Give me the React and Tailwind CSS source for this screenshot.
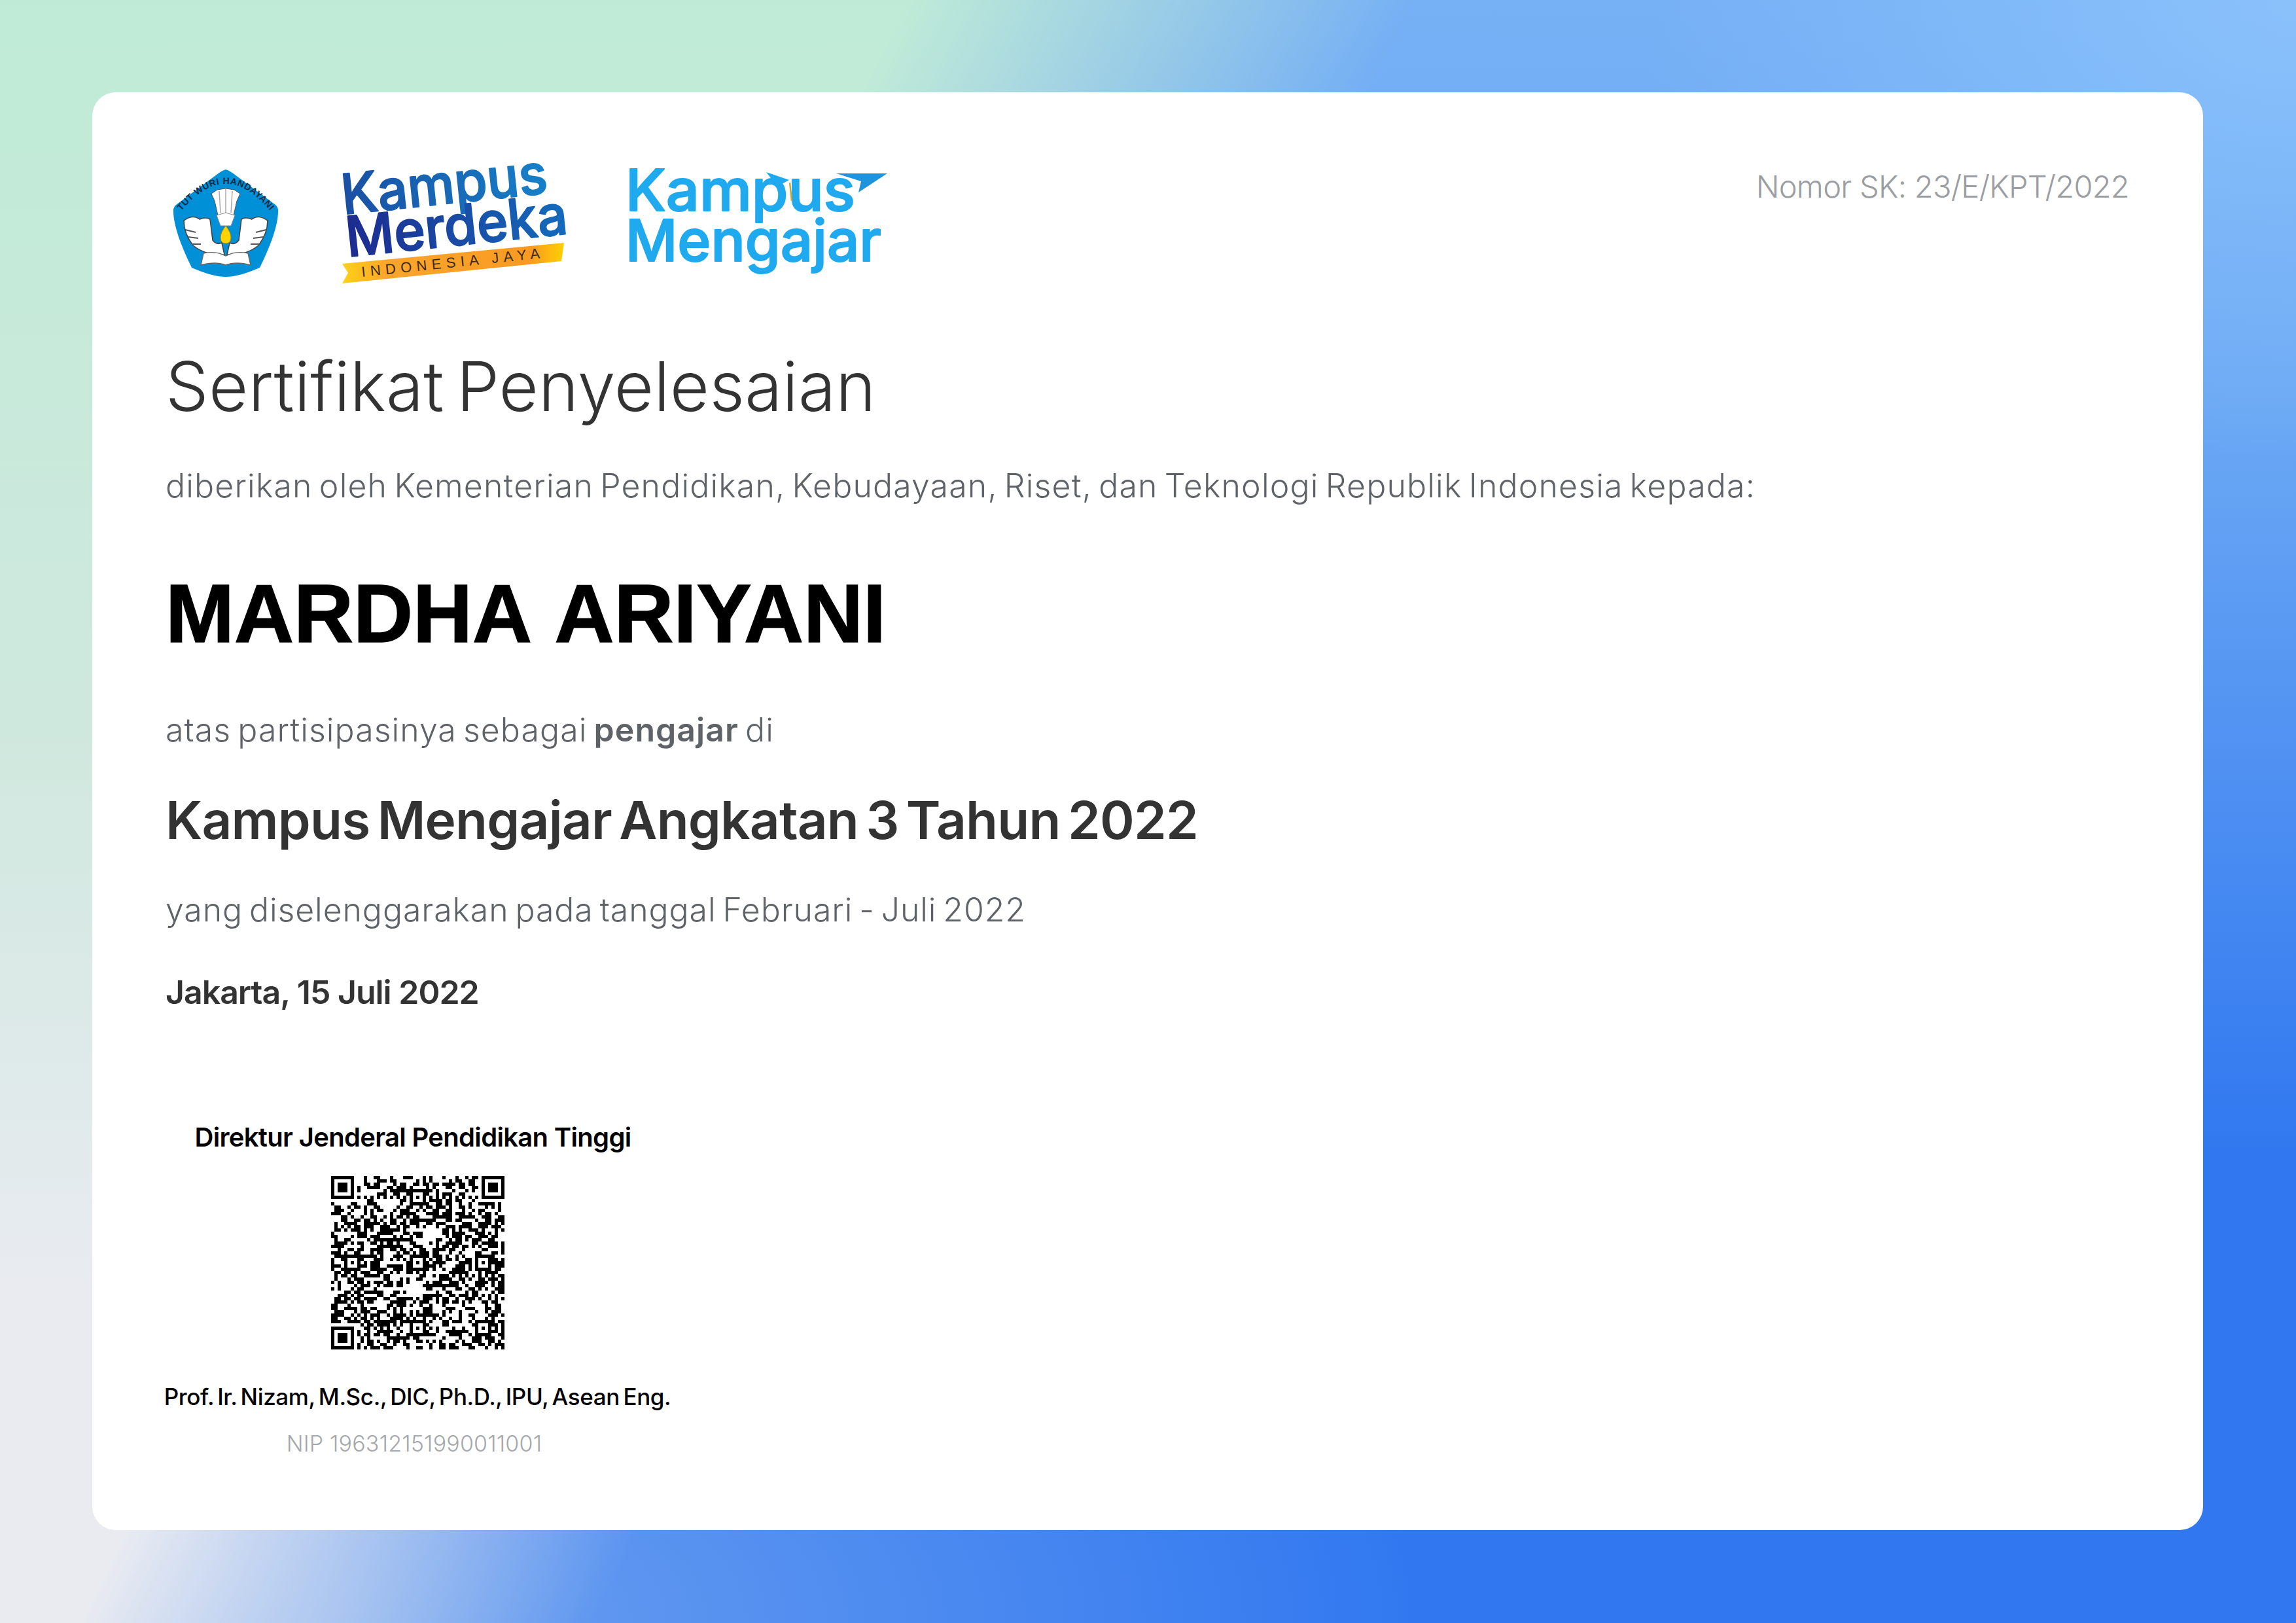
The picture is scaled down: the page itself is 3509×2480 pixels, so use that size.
const qrSize = 53;

// finder, timing and alignment patterns, the rest is filler noise
const buildQr = () => {
  const cells = [];
  let seed = 20220715;
  const next = () => {
    seed = (seed * 1664525 + 1013904223) % 4294967296;
    return seed / 4294967296;
  };
  for (let y = 0; y < qrSize; y++) {
    const row = [];
    for (let x = 0; x < qrSize; x++) row.push(next() > 0.5);
    cells.push(row);
  }
  const blank = [[17, 8, 3], [25, 34, 3], [30, 17, 2]];
  blank.forEach(([cx, cy, r]) => {
    for (let y = cy - r; y <= cy + r; y++)
      for (let x = cx - r; x <= cx + r; x++)
        if (Math.abs(x - cx) + Math.abs(y - cy) <= r) cells[y][x] = false;
  });
  const finder = (ox, oy) => {
    for (let y = -1; y < 8; y++)
      for (let x = -1; x < 8; x++) {
        const px = ox + x;
        const py = oy + y;
        if (px < 0 || py < 0 || px >= qrSize || py >= qrSize) continue;
        const ring = x >= 0 && x <= 6 && y >= 0 && y <= 6 && (x === 0 || x === 6 || y === 0 || y === 6);
        const core = x >= 2 && x <= 4 && y >= 2 && y <= 4;
        cells[py][px] = ring || core;
      }
  };
  finder(0, 0);
  finder(qrSize - 7, 0);
  finder(0, qrSize - 7);
  for (let i = 8; i < qrSize - 8; i++) {
    cells[6][i] = i % 2 === 0;
    cells[i][6] = i % 2 === 0;
  }
  const spots = [[6, 26], [26, 6], [26, 26], [26, 46], [46, 26], [46, 46]];
  spots.forEach(([cx, cy]) => {
    for (let y = -2; y <= 2; y++)
      for (let x = -2; x <= 2; x++)
        cells[cy + y][cx + x] = Math.max(Math.abs(x), Math.abs(y)) !== 1;
  });
  let d = '';
  cells.forEach((row, y) => row.forEach((on, x) => {
    if (on) d += `M${x} ${y}h1v1h-1z`;
  }));
  return d;
};

const qrPath = buildQr();

const TutWuri = () => (
  <svg width="160" height="164" viewBox="0 0 160 164" className="mt-2 ml-3 shrink-0 overflow-visible">
    <path d="M80 0 Q84 1 90 5 L156 54 Q161 58 160 66 Q159 95 132 150 Q100 164 80 164 Q60 164 28 150 Q1 95 0 66 Q-1 58 4 54 L70 5 Q76 1 80 0Z" fill="#0090d7" />
    <defs>
      <path id="tutArc" d="M10 66 Q80 -22 150 66" />
    </defs>
    <text fontFamily="Liberation Sans, sans-serif" fontSize="14" fontWeight="700" fill="#0f2a44" letterSpacing="0.6">
      <textPath href="#tutArc" startOffset="50%" textAnchor="middle">TUT WURI HANDAYANI</textPath>
    </text>
    <path d="M58 37 L67 31 L80 29 L93 31 L102 37 L97 48 L92 70 L68 70 L63 48Z" fill="#fff" stroke="#555" strokeWidth="1" />
    <path d="M70 33 L72 66 M80 30 L80 66 M90 33 L88 66" stroke="#aaa" strokeWidth="1.5" fill="none" />
    <path d="M16 78 Q30 68 40 76 Q50 72 56 76 L60 108 Q66 116 74 112 L78 130 Q50 132 30 116 Q16 98 16 78Z" fill="#fff" stroke="#444" strokeWidth="1.6" />
    <path d="M144 78 Q130 68 120 76 Q110 72 104 76 L100 108 Q94 116 86 112 L82 130 Q110 132 130 116 Q144 98 144 78Z" fill="#fff" stroke="#444" strokeWidth="1.6" />
    <path d="M18 92 L34 96 M22 103 L38 105 M28 114 L42 114 M142 92 L126 96 M138 103 L122 105 M132 114 L118 114" stroke="#555" strokeWidth="2" fill="none" />
    <path d="M66 70 L80 66 L94 70 L88 86 L72 86Z" fill="#fff" stroke="#888" strokeWidth="1" />
    <path d="M80 86 Q88 96 88 104 Q88 113 80 113 Q72 113 72 104 Q72 96 80 86Z" fill="#ffd200" stroke="#a8860f" strokeWidth="1" />
    <path d="M46 128 Q64 124 80 132 Q96 124 114 128 L118 146 Q96 140 80 146 Q64 140 42 146Z" fill="#fff" stroke="#666" strokeWidth="1.4" />
  </svg>
);

const KampusMerdeka = () => (
  <svg width="340" height="182" viewBox="0 0 340 182" className="ml-[98px] shrink-0 overflow-visible">
    <defs>
      <linearGradient id="kmTop" x1="0" x2="1" y1="0" y2="0">
        <stop offset="0" stopColor="#1a4fa3" />
        <stop offset="1" stopColor="#1680c9" />
      </linearGradient>
      <linearGradient id="kmMid" x1="0" x2="1" y1="0" y2="0">
        <stop offset="0" stopColor="#1d2a8f" />
        <stop offset="1" stopColor="#146cbc" />
      </linearGradient>
      <linearGradient id="kmBand" x1="0" x2="1" y1="0" y2="0">
        <stop offset="0" stopColor="#ffd117" />
        <stop offset="0.2" stopColor="#fba52c" />
        <stop offset="0.85" stopColor="#f99a22" />
        <stop offset="1" stopColor="#ffd000" />
      </linearGradient>
    </defs>
    <g transform="rotate(-6 0 80)" fontFamily="Inter, sans-serif" fontWeight="500" strokeWidth="2" strokeLinejoin="round">
      <text x="2" y="77" fontSize="85" fill="url(#kmTop)" stroke="url(#kmTop)" textLength="316" lengthAdjust="spacingAndGlyphs">Kampus</text>
      <text x="2" y="142" fontSize="85" fill="url(#kmMid)" stroke="url(#kmMid)" textLength="340" lengthAdjust="spacingAndGlyphs">Merdeka</text>
    </g>
    <path d="M0 152 L339 120 L335 148 L0 182 L9 166Z" fill="url(#kmBand)" />
    <text transform="rotate(-6 30 170)" x="30" y="172" fontFamily="Liberation Sans, sans-serif" fontSize="22" fill="#3a2a18" letterSpacing="7.4">INDONESIA JAYA</text>
  </svg>
);

const KampusMengajar = () => (
  <svg width="398" height="172" viewBox="0 0 398 172" className="ml-[93px] shrink-0 overflow-visible">
    <g fontFamily="Inter, sans-serif" fontWeight="500" fill="#1fa9ef" stroke="#1fa9ef" strokeWidth="2" strokeLinejoin="round">
      <text x="0" y="71" fontSize="88" textLength="351" lengthAdjust="spacingAndGlyphs">Kampus</text>
      <text x="0" y="148" fontSize="88" textLength="391" lengthAdjust="spacingAndGlyphs">Mengajar</text>
    </g>
    <path d="M322 14 L400 14 L356 43 L360 26Z" fill="#1f93dc" />
    <path d="M215 12 L250 24 L232 34Z" fill="#1fa9ef" />
    <path d="M251 28 L254 56" stroke="#c9a93a" strokeWidth="2.5" fill="none" />
  </svg>
);

export default function App() {
  return (
    <div className="relative h-[2480px] w-[3509px] overflow-hidden bg-[radial-gradient(ellipse_1700px_800px_at_500px_2480px,rgba(130,175,240,0.75),transparent),radial-gradient(ellipse_1000px_700px_at_3509px_0px,rgba(140,195,252,0.9),transparent),linear-gradient(180deg,#76b0f5_0%,#6ba8f4_25%,#3077f0_72%,#3077f0_100%)] p-[141px] pr-[142px] font-['Inter',sans-serif]">
      <div className="absolute inset-0 bg-[linear-gradient(180deg,#bfebd6_0%,#cfe8de_45%,#e9ebf1_80%,#e9ebf1_100%)] [mask-image:linear-gradient(117deg,#000_29%,transparent_45.5%)]" />
      <div className="relative h-[2197px] rounded-[36px] bg-white pl-[112px] pr-[113px] pt-[110px]">
        <header className="flex items-start justify-between">
          <div className="flex items-start">
            <TutWuri />
            <KampusMerdeka />
            <KampusMengajar />
          </div>
          <p className="mt-1 text-[47px] leading-[60px] font-light tracking-[-0.015em] text-[#9a9da1]">
            Nomor SK: 23/E/KPT/2022
          </p>
        </header>

        <h1 className="mt-[92px] text-[104px] leading-[130px] font-light tracking-[0.002em] [word-spacing:-0.1em] text-[#333333]">
          Sertifikat Penyelesaian
        </h1>
        <p className="mt-[52px] text-[50px] leading-[70px] font-light tracking-[0.023em] [word-spacing:-0.1em] text-[#5f6368]">
          diberikan oleh Kementerian Pendidikan, Kebudayaan, Riset, dan Teknologi Republik Indonesia kepada:
        </p>
        <h2 className="mt-[91px] font-['Liberation_Sans',sans-serif] text-[126px] leading-[140px] font-bold [word-spacing:9px] [-webkit-text-stroke:1.5px_black] text-black">
          MARDHA ARIYANI
        </h2>
        <p className="mt-[72px] text-[50px] leading-[70px] font-light tracking-[0.021em] [word-spacing:-0.1em] text-[#5f6368]">
          atas partisipasinya sebagai <b className="font-semibold">pengajar</b> di
        </p>
        <h3 className="mt-[53px] text-[80px] leading-[100px] font-semibold tracking-[-0.01em] [word-spacing:-0.1em] text-[#333333]">
          Kampus Mengajar Angkatan 3 Tahun 2022
        </h3>
        <p className="mt-[52px] text-[50px] leading-[70px] font-light tracking-[0.018em] [word-spacing:-0.1em] text-[#5f6368]">
          yang diselenggarakan pada tanggal Februari - Juli 2022
        </p>
        <p className="mt-[56px] text-[50px] leading-[70px] font-semibold tracking-[-0.02em] text-[#333333]">
          Jakarta, 15 Juli 2022
        </p>

        <div className="mt-[162px] flex w-[770px] flex-col items-center">
          <p className="pr-[14px] text-[40px] leading-[50px] font-semibold tracking-[-0.017em] whitespace-nowrap text-black">
            Direktur Jenderal Pendidikan Tinggi
          </p>
          <svg width="265" height="265" viewBox="0 0 53 53" shapeRendering="crispEdges" className="mt-[34px] blur-[0.7px]">
            <path d={qrPath} fill="#000" />
          </svg>
          <p className="mt-[49px] text-[35px] leading-[46px] font-medium tracking-[-0.011em] [word-spacing:-0.1em] whitespace-nowrap text-black">
            Prof. Ir. Nizam, M.Sc., DIC, Ph.D., IPU, Asean Eng.
          </p>
          <p className="mt-[27px] pr-[10px] text-[34px] leading-[44px] font-light tracking-[0.005em] whitespace-nowrap text-[#a4a8ac]">
            NIP 196312151990011001
          </p>
        </div>
      </div>
    </div>
  );
}
